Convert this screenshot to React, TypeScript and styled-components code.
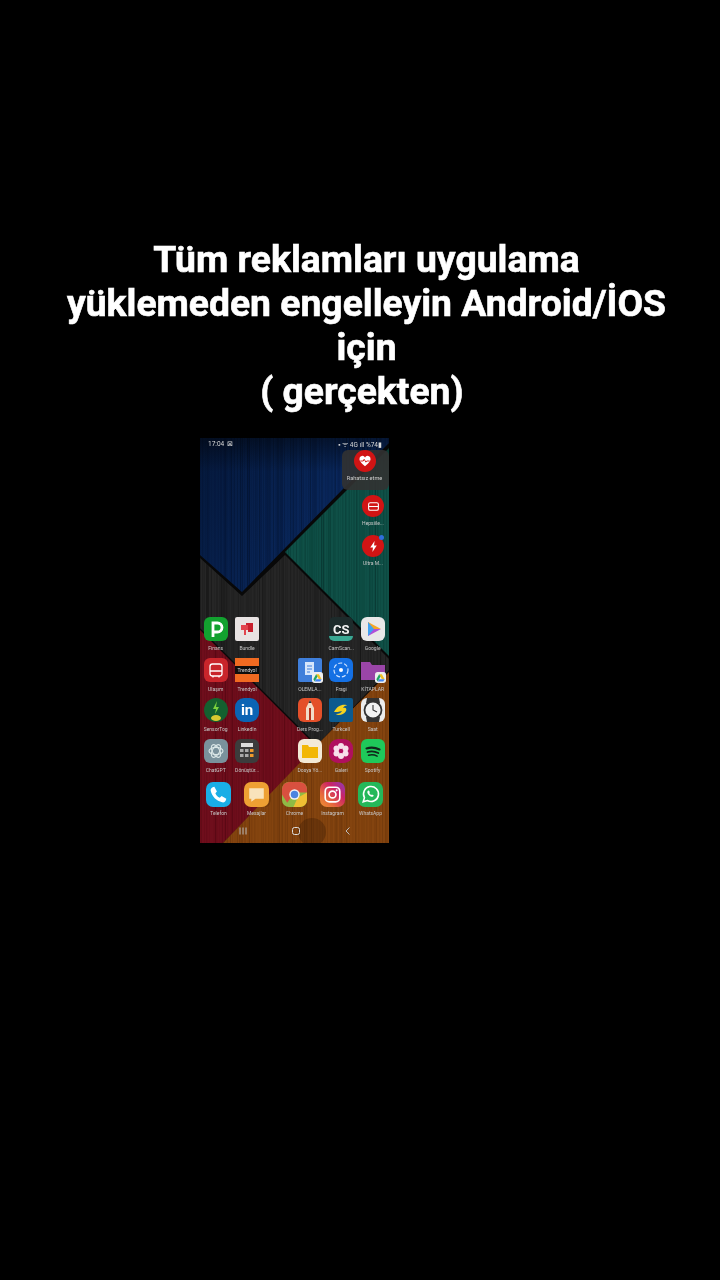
import React from "react";
import styled, { createGlobalStyle } from "styled-components";

const Global = createGlobalStyle`
  html, body { margin: 0; padding: 0; background: #000; }
  #root { width: 720px; height: 1280px; overflow: hidden; }
`;

const Page = styled.main`
  width: 720px;
  height: 1280px;
  background: #000;
  display: flex;
  flex-direction: column;
  padding-top: 237px;
  box-sizing: border-box;
`;

const Title = styled.h1`
  margin: 0 0 25px 13px;
  width: 707px;
  text-align: center;
  color: #fff;
  font: 700 37.3px/44px Roboto, "Liberation Sans", sans-serif;
  -webkit-text-stroke: 0.6px #fff;
  white-space: pre-line;
  filter: blur(0.4px);
`;

const Phone = styled.section`
  position: relative;
  margin-left: 200px;
  width: 189px;
  height: 405px;
  overflow: hidden;
  display: flex;
  flex-direction: column;
  font-family: Roboto, "Liberation Sans", sans-serif;
  color: #e8e8e8;
  filter: blur(0.5px);
`;

const Wallpaper = styled.svg`
  position: absolute;
  inset: 0;
  width: 189px;
  height: 405px;
`;

const StatusBar = styled.div`
  position: relative;
  height: 12px;
  padding: 0 7px 0 8px;
  display: flex;
  align-items: center;
  justify-content: space-between;
  font-size: 6.5px;
  color: #d8d8d8;
`;

const StatusGroup = styled.span`
  display: flex;
  align-items: center;
  gap: 2.5px;
`;

const SideColumn = styled.div`
  position: relative;
  height: 167px;
  display: flex;
  flex-direction: column;
  align-items: flex-end;
`;

const Widget = styled.div`
  width: 47px;
  height: 40px;
  box-sizing: border-box;
  border-radius: 6px;
  background: rgba(50, 50, 50, 0.9);
  display: flex;
  flex-direction: column;
  align-items: center;
  padding-right: 2px;
  gap: 3px;
`;

const WidgetCaption = styled.span`
  font-size: 5.6px;
  line-height: 6px;
  white-space: nowrap;
  color: #cfcfcf;
`;

const Shortcut = styled.div<{ $top: number }>`
  width: 32px;
  margin-top: ${(p) => p.$top}px;
  display: flex;
  flex-direction: column;
  align-items: center;
  gap: 3px;
`;

const RoundIcon = styled.div`
  position: relative;
  width: 22px;
  height: 22px;
  border-radius: 50%;
  background: #d11414;
  display: flex;
  align-items: center;
  justify-content: center;
  flex: none;
`;

const Dot = styled.span`
  position: absolute;
  top: 0;
  right: 0;
  width: 5px;
  height: 5px;
  border-radius: 50%;
  background: #2f6fdc;
`;

const Caption = styled.span`
  font-size: 5px;
  line-height: 6px;
  white-space: nowrap;
  color: #c8c8c8;
`;

const HomeGrid = styled.div`
  position: relative;
  display: grid;
  grid-template-columns: repeat(6, 31.4px);
  grid-auto-rows: 40.7px;
`;

const Cell = styled.div<{ $col?: number; $gap?: number }>`
  ${(p) => (p.$col ? `grid-column: ${p.$col};` : "")}
  display: flex;
  flex-direction: column;
  align-items: center;
  gap: ${(p) => p.$gap ?? 4}px;
`;

const Tile = styled.div<{ $bg: string; $size?: number; $radius?: number }>`
  position: relative;
  width: ${(p) => p.$size ?? 24}px;
  height: ${(p) => p.$size ?? 24}px;
  border-radius: ${(p) => p.$radius ?? 6}px;
  background: ${(p) => p.$bg};
  flex: none;
  display: flex;
  align-items: center;
  justify-content: center;
`;

const Glyph = styled.svg`
  display: block;
  width: 100%;
  height: 100%;
  border-radius: inherit;
`;

const Badge = styled.svg`
  position: absolute;
  right: -1px;
  bottom: -1px;
  width: 11px;
  height: 11px;
`;

const Mark = styled.span<{ $color: string; $size: number }>`
  position: relative;
  color: ${(p) => p.$color};
  font-size: ${(p) => p.$size}px;
  font-weight: 700;
  line-height: 1;
`;

const Band = styled.span`
  position: absolute;
  left: 0;
  right: 0;
  bottom: 0;
  height: 5px;
  border-radius: 0 0 5px 5px;
  background: #3aa893;
`;

const Stripe = styled.span`
  width: 24px;
  height: 8px;
  background: #0d0d0d;
  color: #ddd;
  font-size: 5px;
  line-height: 8px;
  text-align: center;
`;

const Dock = styled.div`
  position: relative;
  margin-top: 2.5px;
  display: grid;
  grid-template-columns: repeat(5, 38px);
  justify-content: center;
`;

const NavBar = styled.div`
  position: relative;
  margin-top: 9px;
  padding: 0 36px 0 38px;
  display: flex;
  align-items: center;
  justify-content: space-between;
  height: 12px;
`;

const NavIcon = styled.svg`
  width: 10px;
  height: 10px;
`;

const grain = (x0: number, x1: number, color: string, seed: number, strength = 1) => {
  const out: React.ReactElement[] = [];
  let r = seed;
  let x = x0;
  while (x < x1) {
    r = (r * 7919 + 17) % 1009;
    const w = 0.4 + (r % 7) * 0.15;
    out.push(<line key={x} x1={x} y1={0} x2={x} y2={405} stroke={color} strokeWidth={w} opacity={(0.25 + (r % 5) * 0.1) * strength} />);
    x += 1.4 + (r % 11) * 0.2;
  }
  return out;
};

const Art = () => (
  <Wallpaper viewBox="0 0 189 405">
    <defs>
      <clipPath id="blue"><polygon points="0,0 189,0 189,5 142,52 42,154 0,117" /></clipPath>
      <clipPath id="green"><polygon points="189,10 85,114 189,218" /></clipPath>
      <clipPath id="grey"><polygon points="0,120 42,158 85,117 189,221 189,232 117,307 0,190" /></clipPath>
      <clipPath id="red"><polygon points="0,192 117,309 23,405 0,405" /></clipPath>
      <clipPath id="wood"><polygon points="23,405 117,307 189,234 189,405" /></clipPath>
      <linearGradient id="blueShade" x1="0" y1="0" x2="1" y2="1">
        <stop offset="0" stopColor="#05183a" />
        <stop offset="0.5" stopColor="#0a2a62" />
        <stop offset="1" stopColor="#071d45" />
      </linearGradient>
      <linearGradient id="topShade" x1="0" y1="0" x2="0" y2="1">
        <stop offset="0" stopColor="#000" stopOpacity="0.45" />
        <stop offset="1" stopColor="#000" stopOpacity="0" />
      </linearGradient>
    </defs>
    <rect width="189" height="405" fill="#080808" />
    <g clipPath="url(#blue)">
      <rect width="189" height="405" fill="url(#blueShade)" />
      {grain(0, 189, "#020c20", 3, 0.7)}
    </g>
    <g clipPath="url(#green)">
      <rect width="189" height="405" fill="#0f5047" />
      {grain(0, 189, "#052a25", 5, 0.8)}
    </g>
    <g clipPath="url(#grey)">
      <rect width="189" height="405" fill="#262626" />
      {grain(0, 189, "#0c0c0c", 7, 0.8)}
    </g>
    <g clipPath="url(#red)">
      <rect width="189" height="405" fill="#6f0e1c" />
      {grain(0, 189, "#48060f", 11, 0.8)}
    </g>
    <g clipPath="url(#wood)">
      <rect width="189" height="405" fill="#84440f" />
      {grain(0, 189, "#5c2d09", 13, 0.9)}
      <ellipse cx="112" cy="394" rx="14" ry="14" fill="#2e1504" opacity="0.3" />
      <ellipse cx="66" cy="360" rx="5" ry="9" fill="#3a1c05" opacity="0.25" />
    </g>
    <rect width="189" height="34" fill="url(#topShade)" />
  </Wallpaper>
);

const V = ({ children }: { children: React.ReactNode }) => <Glyph viewBox="0 0 24 24">{children}</Glyph>;

const DriveBadge = () => (
  <Badge viewBox="0 0 12 12">
    <rect width="12" height="12" rx="3" fill="#eee" />
    <path d="M4.5 2.5h3L10.5 8H7.5z" fill="#f3c020" />
    <path d="M4.5 2.5 1.5 8 3 10.3 6 5z" fill="#1fa463" />
    <path d="M3 10.3h6L10.5 8h-6z" fill="#4285f4" />
  </Badge>
);

const apps = [
  { col: 1, name: "Finans", tile: <Tile $bg="#12a12f"><V><path d="M9 20V6h4.500a4.500 4.500 0 0 1 0 9H9" fill="none" stroke="#fff" strokeWidth="2.800" /></V></Tile> },
  { col: 2, name: "Bundle", tile: <Tile $bg="#e8e3e3" $radius={2}><V><path d="M6 8h7v5h-2v5H9v-5H6z" fill="#e2444e" /><path d="M11 6h7v9h-5V8h-2z" fill="#c8202e" /></V></Tile> },
  { col: 5, name: "CamScan...", tile: <Tile $bg="#1d2b2b" $radius={5}><Band /><Mark $color="#f4f4f4" $size={13}>CS</Mark></Tile> },
  { col: 6, name: "Google", tile: <Tile $bg="#e8e8e8"><V><path d="M7 5l13 7H7z" fill="#f5a623" /><path d="M7 12h13L7 19z" fill="#b04fd8" /><path d="M7 5l6 7-6 7z" fill="#3fa2f0" /></V></Tile> },
  { col: 1, name: "Ulaşım", tile: <Tile $bg="#c9252b"><V><rect x="6" y="6" width="12" height="12" rx="2.500" fill="none" stroke="#fff" strokeWidth="1.300" /><path d="M6 13h12M9 18v1.500M15 18v1.500" stroke="#fff" strokeWidth="1.300" /></V></Tile> },
  { col: 2, name: "Trendyol", tile: <Tile $bg="#f06a21" $radius={0}><Stripe>Trendyol</Stripe></Tile> },
  { col: 4, name: "OLEMLA...", tile: <Tile $bg="#3f7fdb" $radius={2}><V><path d="M7 4h9v13H7z" fill="#d7e6fb" /><path d="M9 8h5M9 11h5M9 14h3" stroke="#3f7fdb" strokeWidth="1" /></V><DriveBadge /></Tile> },
  { col: 5, name: "Fragi", tile: <Tile $bg="#1470e4"><V><circle cx="12" cy="12" r="7" fill="none" stroke="#cfe2ff" strokeWidth="1.200" strokeDasharray="4 2" /><circle cx="12" cy="12" r="2" fill="#fff" /></V></Tile> },
  { col: 6, name: "KİTAPLAR", tile: <Tile $bg="transparent" $radius={0}><V><path d="M0 4h9l2 3h13v15H0z" fill="#9a45a8" /></V><DriveBadge /></Tile> },
  { col: 1, name: "SensorTog", tile: <Tile $bg="#14602f" $radius={12}><V><path d="M13 3l-4 8h3l-1 5 4-7h-3z" fill="#7bd23d" /><ellipse cx="12" cy="20" rx="5" ry="3" fill="#d8c930" /></V></Tile> },
  { col: 2, name: "LinkedIn", tile: <Tile $bg="#0b64b4" $radius={9}><Mark $color="#fff" $size={15}>in</Mark></Tile> },
  { col: 4, name: "Ders Prog...", tile: <Tile $bg="#e4502a"><V><path d="M8 22V10l4-8 4 8v12z" fill="#f1dcc8" /><path d="M10.500 5l1.500-3 1.500 3z" fill="#333" /><path d="M11 10h2v12h-2z" fill="#b5301a" /></V></Tile> },
  { col: 5, name: "Turkcell", tile: <Tile $bg="#0c5a8f" $radius={2}><V><path d="M5 14c3-7 11-9 14-6-2-1-4 0-5 2 3-1 4 1 3 3-2 4-8 5-10 3 3 0 5-1 6-3-3 1-6 1-8 1z" fill="#f6d21f" /></V></Tile> },
  { col: 6, name: "Saat", tile: <Tile $bg="#ececec"><V><path d="M6 0h12l1 5H5zM5 19h14l-1 5H6z" fill="#333" /><circle cx="12" cy="12" r="8.500" fill="#f2f2f2" stroke="#333" strokeWidth="1.800" /><path d="M12 7v5l4 2" fill="none" stroke="#333" strokeWidth="1.100" /></V></Tile> },
  { col: 1, name: "ChatGPT", tile: <Tile $bg="#7a929c"><V><g fill="none" stroke="#d9e6e6" strokeWidth="1.100"><ellipse cx="12" cy="12" rx="7" ry="3.600" /><ellipse cx="12" cy="12" rx="7" ry="3.600" transform="rotate(60 12 12)" /><ellipse cx="12" cy="12" rx="7" ry="3.600" transform="rotate(120 12 12)" /></g></V></Tile> },
  { col: 2, name: "Dönüştür...", tile: <Tile $bg="#3c3c3c"><V><rect x="6" y="4" width="12" height="4" fill="#ddd" /><g fill="#a9a9a9"><rect x="5" y="10" width="3.500" height="3" /><rect x="10" y="10" width="3.500" height="3" /><rect x="5" y="15" width="3.500" height="3" /><rect x="10" y="15" width="3.500" height="3" /></g><g fill="#ef9b2d"><rect x="15" y="10" width="3.500" height="3" /><rect x="15" y="15" width="3.500" height="3" /></g></V></Tile> },
  { col: 4, name: "Dosya Yö...", tile: <Tile $bg="#f3ead6"><V><path d="M4 6h6l1 2h9v11H4z" fill="#f2b705" /></V></Tile> },
  { col: 5, name: "Galeri", tile: <Tile $bg="#b0105e" $radius={9}><V><g fill="#f7dfe9"><circle cx="12" cy="7" r="3" /><circle cx="12" cy="17" r="3" /><circle cx="7.500" cy="9.500" r="3" /><circle cx="16.500" cy="9.500" r="3" /><circle cx="7.500" cy="14.500" r="3" /><circle cx="16.500" cy="14.500" r="3" /></g><circle cx="12" cy="12" r="1.800" fill="#b0105e" /></V></Tile> },
  { col: 6, name: "Spotify", tile: <Tile $bg="#1fc95a"><V><g fill="none" stroke="#10261a" strokeLinecap="round"><path d="M5.500 9.500c4-1.400 9-1 13 1" strokeWidth="2.100" /><path d="M6.500 13c3.500-1 7.500-.7 10.800 1" strokeWidth="1.800" /><path d="M7.500 16.200c3-.7 6-.5 8.600.9" strokeWidth="1.500" /></g></V></Tile> },
];

const dock = [
  { name: "Telefon", tile: <Tile $bg="#1aaee6" $size={25} $radius={7}><V><path d="M8 4.500 10.500 9 9 10.800c.8 2 2.200 3.400 4.200 4.200L15 13.500l4.500 2.500c-.4 2.400-2 4-4 3.500C10 18.300 5.700 14 4.500 8.500 4 6.500 5.600 4.900 8 4.500z" fill="#fff" /></V></Tile> },
  { name: "Mesajlar", tile: <Tile $bg="#eea033" $size={25} $radius={7}><V><path d="M5 6h14v10h-8l-4 3v-3H5z" fill="#f9e3bb" /></V></Tile> },
  { name: "Chrome", tile: <Tile $bg="#8fbb45" $size={25} $radius={7}><V><path d="M0 6a6 6 0 0 1 6-6h12a6 6 0 0 1 6 6v4H12L5 20 0 12z" fill="#d9503f" /><path d="M24 10v8a6 6 0 0 1-6 6h-7l4-9z" fill="#efbe33" /><circle cx="12" cy="12" r="5" fill="#f2f2f2" /><circle cx="12" cy="12" r="3.600" fill="#4a84e0" /></V></Tile> },
  { name: "Instagram", tile: <Tile $bg="linear-gradient(45deg,#f09433,#e6683c 30%,#cc2366 65%,#8a3ab9)" $size={25} $radius={7}><V><rect x="5" y="5" width="14" height="14" rx="4" fill="none" stroke="#fff" strokeWidth="1.600" /><circle cx="12" cy="12" r="3.300" fill="none" stroke="#fff" strokeWidth="1.600" /><circle cx="16" cy="8" r="1" fill="#fff" /></V></Tile> },
  { name: "WhatsApp", tile: <Tile $bg="#24b85a" $size={25} $radius={7}><V><path d="M5 19l1.200-4a7.200 7.200 0 1 1 2.800 2.800z" fill="none" stroke="#fff" strokeWidth="1.500" /><path d="M9.500 8.500c-1 1-.6 2.500.8 4s3 2.200 4.200 1.400l.7-1-1.800-1-.7.6c-.8-.3-1.500-1-1.900-1.900l.6-.7-.9-1.800z" fill="#fff" /></V></Tile> },
];

export default function App() {
  return (
    <Page>
      <Global />
      <Title>{"Tüm reklamları uygulama\nyüklemeden engelleyin Android/İOS\niçin\n( gerçekten)\u00a0"}</Title>
      <Phone>
        <Art />
        <StatusBar>
          <StatusGroup>17:04 <span>⊠</span></StatusGroup>
          <StatusGroup>▪ ᯤ 4G ıll %74▮</StatusGroup>
        </StatusBar>
        <SideColumn>
          <Widget>
            <RoundIcon>
              <svg width="14" height="14" viewBox="0 0 24 24"><path d="M12 21C5 15 2.500 12 2.500 8.500A5 5 0 0 1 12 6a5 5 0 0 1 9.500 2.500C21.500 12 19 15 12 21z" fill="#fff" /><path d="M4 12h5l1.500-3 3 5 1.500-2h5" fill="none" stroke="#d11414" strokeWidth="1.600" /></svg>
            </RoundIcon>
            <WidgetCaption>Rahatsız etme</WidgetCaption>
          </Widget>
          <Shortcut $top={5}>
            <RoundIcon>
              <svg width="13" height="13" viewBox="0 0 24 24"><rect x="3" y="5" width="18" height="14" rx="3" fill="none" stroke="#fff" strokeWidth="2" /><path d="M3 12h18" stroke="#fff" strokeWidth="2" /></svg>
            </RoundIcon>
            <Caption>Hepsiile...</Caption>
          </Shortcut>
          <Shortcut $top={9}>
            <RoundIcon>
              <svg width="13" height="13" viewBox="0 0 24 24"><path d="M14 2 6 14h5l-1 8 8-12h-5z" fill="#fff" /></svg>
              <Dot />
            </RoundIcon>
            <Caption>Ultra M...</Caption>
          </Shortcut>
        </SideColumn>
        <HomeGrid>
          {apps.map((a) => (
            <Cell key={a.name} $col={a.col}>
              {a.tile}
              <Caption>{a.name}</Caption>
            </Cell>
          ))}
        </HomeGrid>
        <Dock>
          {dock.map((a) => (
            <Cell key={a.name} $gap={3}>
              {a.tile}
              <Caption>{a.name}</Caption>
            </Cell>
          ))}
        </Dock>
        <NavBar>
          <NavIcon viewBox="0 0 10 10"><path d="M2 1.500v7M5 1.500v7M8 1.500v7" stroke="#bbb" strokeWidth="1" /></NavIcon>
          <NavIcon viewBox="0 0 10 10"><rect x="1.500" y="1.500" width="7" height="7" rx="2" fill="none" stroke="#ddd" strokeWidth="1" /></NavIcon>
          <NavIcon viewBox="0 0 10 10"><path d="M6.500 1.500 3 5l3.500 3.500" fill="none" stroke="#bbb" strokeWidth="1" /></NavIcon>
        </NavBar>
      </Phone>
    </Page>
  );
}
